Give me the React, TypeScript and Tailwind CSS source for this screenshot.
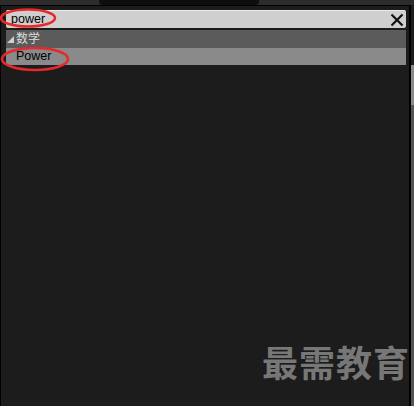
import React from "react";

export default function App() {
  return (
    <div
      className="relative w-[414px] h-[406px] overflow-hidden bg-[#1c1c1c]"
      style={{ fontFamily: '"Liberation Sans", "Noto Sans CJK SC", sans-serif' }}
    >
      {/* top strip */}
      <div className="flex h-[5px] bg-[#2c2c2c]">
        <div className="ml-[99px] w-[160px] h-[5px] bg-[#0e0e0e] rounded-b-[4px]" />
      </div>
      <div className="flex h-[401px]">
        {/* panel */}
        <div className="w-[411px] border-t border-l border-r-2 border-black bg-[#1c1c1c] pt-[4px] pl-[5px] pr-[3px] flex flex-col">
          <div className="h-[18px] w-[400px] rounded-[2px] bg-[#cfcfcf] border-t border-[#ececec] flex items-center justify-between pl-[5px] pr-[2px]">
            <span className="text-[12.5px] leading-none text-black">power</span>
            <svg width="14" height="14" viewBox="0 0 14 14">
              <path d="M1.5 1.5 L12.5 12.5 M12.5 1.5 L1.5 12.5" stroke="#111" strokeWidth="2.2" />
            </svg>
          </div>
          <div className="mt-[2px] h-[18px] w-[400px] bg-[#5b5b5b] flex items-center pl-[1px]">
            <svg width="7" height="7" viewBox="0 0 7 7" className="mr-[2px]">
              <polygon points="7,0 7,7 0,7" fill="#cfcfcf" />
            </svg>
            <span className="text-[12px] leading-none text-[#dcdcdc]">数学</span>
          </div>
          <div className="h-[17px] w-[400px] bg-[#8a8a8a] flex items-center pl-[10px]">
            <span className="text-[12.5px] leading-none text-black">Power</span>
          </div>
        </div>
        {/* right scroll strip */}
        <div className="flex-1 flex flex-col">
          <div className="h-[60px] bg-[#1c1c1c]" />
          <div className="h-[40px] bg-[#8a8a8a]" />
          <div className="flex-1 bg-[#555555]" />
        </div>
      </div>

      {/* annotation ellipses */}
      <svg className="absolute left-0 top-0 pointer-events-none" width="414" height="406">
        <ellipse cx="28" cy="18" rx="27" ry="8.5" fill="none" stroke="#e8282a" strokeWidth="2.5" />
        <ellipse cx="35" cy="59" rx="33" ry="11" fill="none" stroke="#e8282a" strokeWidth="2.5" />
      </svg>

      {/* watermark */}
      <div
        className="absolute left-[262px] top-[343px] text-[36px] font-bold leading-none text-[#777777] tracking-[1px]"
        style={{ fontFamily: '"Noto Sans CJK SC", sans-serif' }}
      >
        最需教育
      </div>
    </div>
  );
}
